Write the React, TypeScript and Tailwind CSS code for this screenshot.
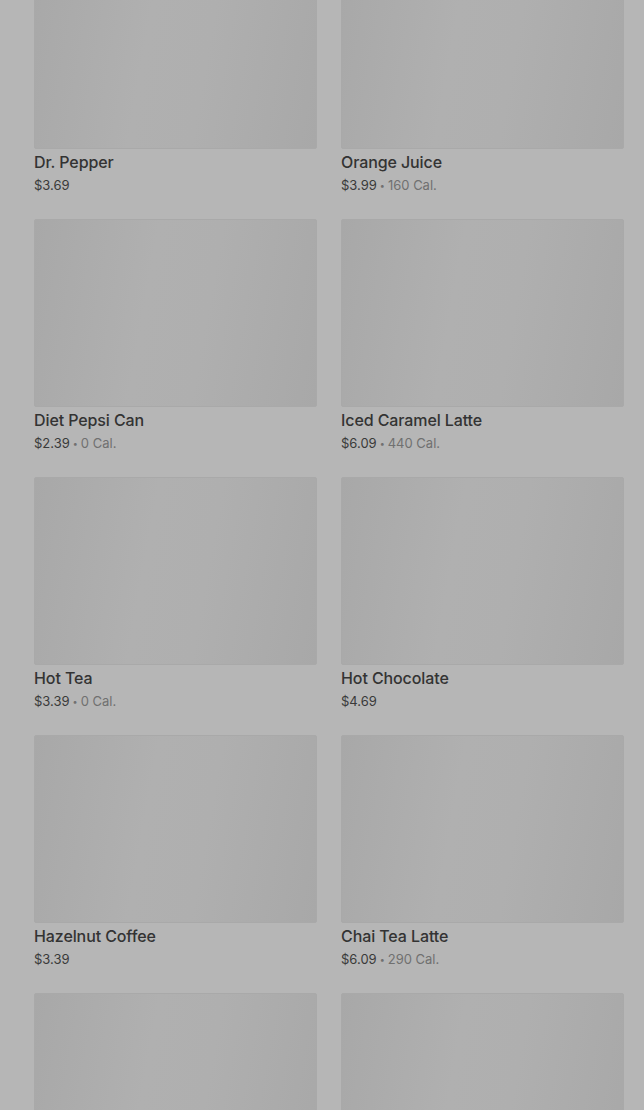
import React from 'react';

interface MenuItem {
  name: string;
  price: string;
  cal?: string;
}

const items: MenuItem[] = [
  { name: 'Dr. Pepper', price: '$3.69' },
  { name: 'Orange Juice', price: '$3.99', cal: '160 Cal.' },
  { name: 'Diet Pepsi Can', price: '$2.39', cal: '0 Cal.' },
  { name: 'Iced Caramel Latte', price: '$6.09', cal: '440 Cal.' },
  { name: 'Hot Tea', price: '$3.39', cal: '0 Cal.' },
  { name: 'Hot Chocolate', price: '$4.69' },
  { name: 'Hazelnut Coffee', price: '$3.39' },
  { name: 'Chai Tea Latte', price: '$6.09', cal: '290 Cal.' },
  { name: '', price: '' },
  { name: '', price: '' },
];

const ItemCard: React.FC<{ item: MenuItem }> = ({ item }) => (
  <div className="flex flex-col h-[258px]">
    <div className="h-[188px] w-full rounded-[2px] border border-[#a9a9a9] bg-[linear-gradient(100deg,#a8a8a8_0%,#b0b0b0_40%,#afafaf_60%,#a8a8a8_100%)]" />
    {item.name && (
      <div className="pt-[2px]">
        <div className="text-[16px] leading-[22px] font-medium tracking-[-0.1px] text-[#333333]">{item.name}</div>
        <div className="text-[13px] leading-[24px] text-[#3a3a3a]">
          {item.price}
          {item.cal && (
            <span className="text-[#707070]">
              <span className="mx-[3px] text-[9px] align-[1px]">•</span>
              {item.cal}
            </span>
          )}
        </div>
      </div>
    )}
  </div>
);

export default function App() {
  return (
    <div
      className="h-[1110px] w-[644px] overflow-hidden bg-[#b6b6b6]"
      style={{ fontFamily: 'Inter, "Noto Sans", sans-serif' }}
    >
      <div className="-mt-[39px] grid grid-cols-2 gap-x-[24px] pl-[34px] pr-[20px]">
        {items.map((item, i) => (
          <ItemCard key={i} item={item} />
        ))}
      </div>
    </div>
  );
}
